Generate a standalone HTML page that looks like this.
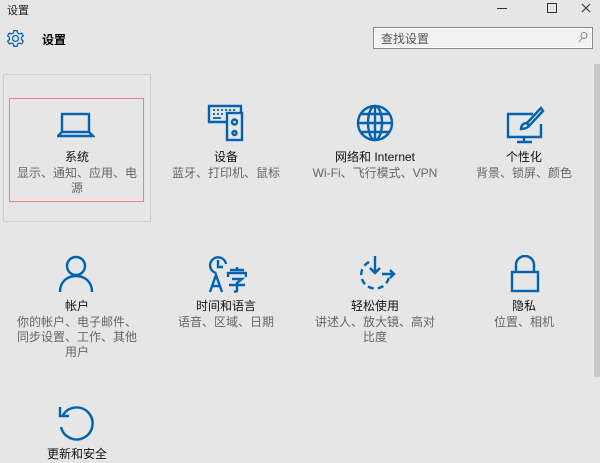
<!DOCTYPE html>
<html><head><meta charset="utf-8"><style>
body{margin:0;width:600px;height:461px;background:#e6e6e6;font-family:"Liberation Sans","Noto Sans CJK SC",sans-serif;position:relative;overflow:hidden;color:#000}
.a{position:absolute}
.t{position:absolute;width:140px;text-align:center;font-size:12px;line-height:15px}
.t b{display:block;font-weight:normal;color:#111;margin-bottom:1px}
.t span{color:#666;display:block}
svg{position:absolute;fill:none;stroke:#0063b1;stroke-width:2.4}
</style></head><body>
<div class="a" style="left:7px;top:2px;font-size:11px;color:#222">设置</div>
<div class="a" style="left:497px;top:8px;width:10px;border-top:1px solid #333"></div>
<div class="a" style="left:547px;top:3px;width:8px;height:8px;border:1px solid #333"></div>
<svg style="left:581px;top:3px;stroke:#333;stroke-width:1.1" width="10" height="10" viewBox="0 0 10 10"><path d="M1 1l8 8M9 1l-8 8"/></svg>
<svg style="left:6px;top:29px;stroke-width:1.2" width="19" height="19" viewBox="0 0 18 18"><circle cx="9" cy="9" r="2.8"/><path d="M7.5 1.5h3l.5 2.2 1.8 1 2.1-.8 1.5 2.6-1.7 1.5v2l1.7 1.5-1.5 2.6-2.1-.8-1.8 1-.5 2.2h-3l-.5-2.2-1.8-1-2.1.8-1.5-2.6 1.7-1.5v-2L1.6 6.5l1.5-2.6 2.1.8 1.8-1z"/></svg>
<div class="a" style="left:42px;top:31px;font-size:12px;font-weight:bold">设置</div>
<div class="a" style="left:373px;top:27px;width:218px;height:20px;border:1px solid #8a8a8a;background:#f2f2f2;box-shadow:inset 0 0 0 1px #fff"></div>
<div class="a" style="left:381px;top:30px;font-size:12px;color:#555">查找设置</div>
<svg style="left:578px;top:31px;stroke:#888;stroke-width:1" width="10" height="12" viewBox="0 0 10 12"><circle cx="6" cy="4.5" r="3"/><path d="M4 7L1 11"/></svg>
<div class="a" style="left:594px;top:64px;width:6px;height:313px;background:#c8c8c8"></div>
<div class="a" style="left:3px;top:74px;width:146px;height:146px;border:1px solid #cdcdcd"></div>
<div class="a" style="left:9px;top:98px;width:133px;height:102px;border:1px solid #f08080"></div>

<svg style="left:57px;top:112px" width="38" height="26" viewBox="0 0 38 26" stroke-width="2"><rect x="5" y="2" width="27" height="18"/><path d="M5 20L1 24h35l-4-4"/></svg>
<svg style="left:207px;top:104px" width="38" height="38" viewBox="0 0 38 38" stroke-width="2"><path d="M20 18H2V2h32v6"/><rect x="20" y="9" width="15" height="27"/><circle cx="27.5" cy="18" r="2.5"/><circle cx="27.5" cy="29" r="2"/><path d="M6 6h2M10 6h2M14 6h2M18 6h2M22 6h2M26 6h2M6 10h2M10 10h2M14 10h2M6 14h8" stroke-width="1.8"/></svg>
<svg style="left:356px;top:104px" width="38" height="38" viewBox="0 0 38 38" stroke-width="2"><circle cx="19" cy="19" r="17"/><ellipse cx="19" cy="19" rx="7" ry="17"/><path d="M19 2v34M2 19h34M5 10h28M5 28h28"/></svg>
<svg style="left:505px;top:106px" width="40" height="38" viewBox="0 0 40 38" stroke-width="2"><path d="M28 8H3v23h33V18M19 31v5M12 36h15"/><path d="M36 2L22 17l2 3 14-15z"/><path d="M22 17c-3 0-6 2-6 6 3 0 6-1 8-3"/></svg>

<div class="t" style="left:7px;top:150px"><b>系统</b><span>显示、通知、应用、电<br>源</span></div>
<div class="t" style="left:156px;top:150px"><b>设备</b><span>蓝牙、打印机、鼠标</span></div>
<div class="t" style="left:305px;top:150px"><b>网络和 Internet</b><span>Wi-Fi、飞行模式、VPN</span></div>
<div class="t" style="left:454px;top:150px"><b>个性化</b><span>背景、锁屏、颜色</span></div>

<svg style="left:58px;top:255px" width="36" height="38" viewBox="0 0 36 38" stroke-width="2.2"><circle cx="18" cy="11" r="9"/><path d="M2 37c0-10 7-16 16-16s16 6 16 16"/></svg>
<svg style="left:207px;top:255px" width="40" height="38" viewBox="0 0 40 38" stroke-width="2.2"><path d="M9 18A8 8 0 1 1 19 9"/><path d="M11 5v7h5"/><path d="M3 37l6-17 6 17M5 31h8" /><path d="M23 15h14M30 12v3M21 22v-4h18v4M25 24h10l-5 4v8l-3 1M22 30h16"/></svg>
<svg style="left:356px;top:255px" width="40" height="38" viewBox="0 0 40 38" stroke-width="2.2"><path d="M13 7A14 14 0 1 0 33 22" stroke-dasharray="6 4"/><path d="M19 1v17M14 13l5 5 5-5M26 19h12M34 15l4 4-4 4"/></svg>
<svg style="left:510px;top:255px" width="30" height="38" viewBox="0 0 30 38" stroke-width="2.4"><path d="M6 17V10a9 9 0 0 1 18 0v7"/><rect x="2" y="17" width="26" height="19"/></svg>

<div class="t" style="left:7px;top:299px"><b>帐户</b><span>你的帐户、电子邮件、<br>同步设置、工作、其他<br>用户</span></div>
<div class="t" style="left:156px;top:299px"><b>时间和语言</b><span>语音、区域、日期</span></div>
<div class="t" style="left:305px;top:299px"><b>轻松使用</b><span>讲述人、放大镜、高对<br>比度</span></div>
<div class="t" style="left:454px;top:299px"><b>隐私</b><span>位置、相机</span></div>

<svg style="left:57px;top:403px" width="40" height="40" viewBox="0 0 40 40" stroke-width="2.4"><path d="M6 12A16 16 0 1 1 4 24"/><path d="M3 4v9h9"/></svg>
<div class="t" style="left:7px;top:447px"><b>更新和安全</b></div>
</body></html>
